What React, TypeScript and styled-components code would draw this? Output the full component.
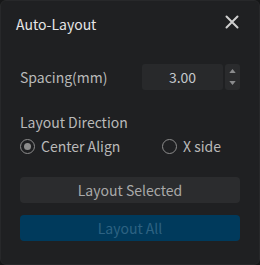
import styled, { createGlobalStyle } from "styled-components"

const Global = createGlobalStyle`
    html, body {
        margin: 0;
        padding: 0;
        background: #161718;
    }
    * {
        box-sizing: border-box;
    }
`

const App = () => {
    return (
        <Panel>
            <Global />
            <Header>
                <Title>Auto-Layout</Title>
                <Close aria-label="close">
                    <svg width="14" height="14" viewBox="0 0 14 14">
                        <path d="M1.5 1.5 L12.5 12.5 M12.5 1.5 L1.5 12.5" stroke="#cfcfcf" strokeWidth="2" strokeLinecap="round" />
                    </svg>
                </Close>
            </Header>
            <Body>
                <SpacingRow>
                    <Label>Spacing(mm)</Label>
                    <Field>
                        <NumberBox>3.00</NumberBox>
                        <Spinner>
                            <Arrow viewBox="0 0 8 5"><path d="M0 5 L4 0 L8 5 Z" fill="#8a8b8d" /></Arrow>
                            <Arrow viewBox="0 0 8 5"><path d="M0 0 L4 5 L8 0 Z" fill="#8a8b8d" /></Arrow>
                        </Spinner>
                    </Field>
                </SpacingRow>
                <Section>
                    <Label>Layout Direction</Label>
                    <RadioRow>
                        <Radio>
                            <Circle $checked />
                            Center Align
                        </Radio>
                        <Radio>
                            <Circle />
                            X side
                        </Radio>
                    </RadioRow>
                </Section>
                <Buttons>
                    <Button>Layout Selected</Button>
                    <Button $primary disabled>Layout All</Button>
                </Buttons>
            </Body>
        </Panel>
    )
}
export default App

const Panel = styled.div`
    width: 260px;
    height: 265px;
    background: #1f2022;
    border: 1px solid #27282a;
    border-radius: 6px;
    font-family: "Noto Sans CJK SC", "Noto Sans", sans-serif;
    color: #c8c8c8;
    overflow: hidden;
`
const Header = styled.div`
    height: 43px;
    display: flex;
    align-items: center;
    justify-content: space-between;
    padding: 3px 20px 0 15px;
`
const Title = styled.div`
    font-size: 14px;
    color: #e6e6e6;
`
const Close = styled.div`
    width: 14px;
    height: 14px;
    display: flex;
    margin-top: -5px;
    margin-right: 0;
`
const Body = styled.div`
    padding: 0 19px;
`
const Label = styled.div`
    font-size: 14px;
    line-height: 20px;
    color: #b9b9b9;
`
const SpacingRow = styled.div`
    margin-top: 20px;
    display: flex;
    align-items: center;
    justify-content: space-between;
    height: 26px;
`
const Field = styled.div`
    display: flex;
    gap: 2px;
    height: 26px;
`
const NumberBox = styled.div`
    width: 81px;
    border-radius: 3px;
    background: #28292b;
    font-size: 14px;
    line-height: 26px;
    text-align: center;
    color: #c4c8cc;
`
const Spinner = styled.div`
    width: 15px;
    border-radius: 3px;
    background: #2a2b2d;
    display: flex;
    flex-direction: column;
    align-items: center;
    justify-content: space-between;
    padding: 5px 0;
`
const Arrow = styled.svg`
    width: 7px;
    height: 4px;
`
const Section = styled.div`
    margin-top: 22px;
`
const RadioRow = styled.div`
    margin-top: 4px;
    display: grid;
    grid-template-columns: 142px 1fr;
`
const Radio = styled.label`
    display: flex;
    align-items: center;
    gap: 6px;
    font-size: 14px;
    line-height: 20px;
    color: #b9b9b9;
`
const Circle = styled.span<{ $checked?: boolean }>`
    width: 15px;
    height: 15px;
    border-radius: 50%;
    border: 1.5px solid #8c8c8c;
    display: flex;
    align-items: center;
    justify-content: center;
    &::after {
        content: "";
        display: ${(p) => (p.$checked ? "block" : "none")};
        width: 7px;
        height: 7px;
        border-radius: 50%;
        background: #8c8c8c;
    }
`
const Buttons = styled.div`
    margin-top: 21px;
    display: flex;
    flex-direction: column;
    gap: 12px;
`
const Button = styled.button<{ $primary?: boolean }>`
    height: 26px;
    border: none;
    border-radius: 4px;
    padding: 0;
    font-family: inherit;
    font-size: 14px;
    background: ${(p) => (p.$primary ? "#003a5c" : "#2b2c2e")};
    color: ${(p) => (p.$primary ? "#2d6282" : "#a9a9a9")};
`
